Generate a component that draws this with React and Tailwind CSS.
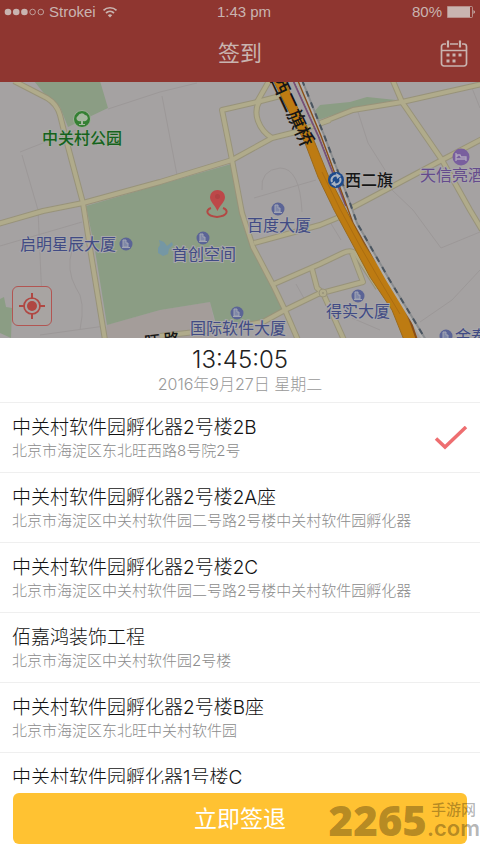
import React, { useState } from "react";

const places = [
  { id: 1, name: "中关村软件园孵化器2号楼2B", address: "北京市海淀区东北旺西路8号院2号" },
  { id: 2, name: "中关村软件园孵化器2号楼2A座", address: "北京市海淀区中关村软件园二号路2号楼中关村软件园孵化器" },
  { id: 3, name: "中关村软件园孵化器2号楼2C", address: "北京市海淀区中关村软件园二号路2号楼中关村软件园孵化器" },
  { id: 4, name: "佰嘉鸿装饰工程", address: "北京市海淀区中关村软件园2号楼" },
  { id: 5, name: "中关村软件园孵化器2号楼B座", address: "北京市海淀区东北旺中关村软件园" },
  { id: 6, name: "中关村软件园孵化器1号楼C", address: "北京市海淀区东北旺中关村软件园" }
];

const roads = [
  "M14 81 L47 98 Q57 104 60 115 L67 143 L83 203 L90 248 L105 340",
  "M-2 224 L43 211 L83 203 L160 182 L232 160 L272 138 L296 132 L330 120",
  "M257 102 L222 110 L232 160 L242 213 L253 247 L273 285 L285 310 L298 340",
  "M269 81 L257 102 L284 95",
  "M260 100 Q254 110 258 121 Q262 132 272 138",
  "M320 123 L353 110 L402 102 L482 84",
  "M393 81 L402 102 L442 160 L470 210 L482 230",
  "M348 210 L442 160 L482 139",
  "M254 243 L320 225 L342 216",
  "M274 284 L320 264 L343 253 Q351 249 356 254 L378 288",
  "M285 310 L318 294 L363 282 L352 253",
  "M312 269 L317 288 L323 293 L344 340",
  "M285 310 L263 322 L222 329 L160 336"
];

const lanes = [
  "M20 152 L76 130 M108 109 L160 92",
  "M22 155 L38 210 L42 300 M0 246 L82 222",
  "M160 92 L197 83 M162 96 L177 175",
  "M72 250 Q66 270 76 288 Q86 300 80 330 M40 335 L105 326",
  "M358 112 L368 143 L385 170 M392 190 L413 210",
  "M472 88 L480 108",
  "M262 190 Q260 170 280 168 Q300 168 302 212 M254 198 L316 180",
  "M413 210 L441 248 L480 232 M420 322 L452 300 L480 270",
  "M296 284 L306 302 M330 222 L341 240 M352 318 L380 330"
];

const buildings = [
  { x: 126, y: 244, label: "启明星辰大厦", tx: 68, ty: 250 },
  { x: 203, y: 238, label: "首创空间", tx: 204, ty: 260 },
  { x: 278, y: 209, label: "百度大厦", tx: 279, ty: 231 },
  { x: 237, y: 313, label: "国际软件大厦", tx: 238, ty: 334 },
  { x: 358, y: 296, label: "得实大厦", tx: 358, ty: 317 },
  { x: 446, y: 336, label: "金泰", tx: 471, ty: 342 }
];

function Map() {
  return (
    <svg
      viewBox="0 82 480 256"
      preserveAspectRatio="xMidYMid slice"
      className="block h-full w-full font-['Noto_Sans_CJK_SC',sans-serif] text-[16px]"
      role="img"
      aria-label="地图"
    >
      <rect x="0" y="82" width="480" height="256" fill="#a5a2a2" />
      <path d="M107 325 L160 310 L210 302 L218 340 L105 340 Z" fill="#a49d9a" />
      <g fill="#8b9d84">
        <path d="M86 206 L231 164 L240 213 L252 249 L283 310 L260 323 L217 328 L210 302 L160 310 L107 325 L95 250 Z" />
        <path d="M34 81 L100 81 L108 108 L68 127 L60 107 L47 97 Z" />
        <path d="M313 113 L320 105 L350 102 L367 97 L396 100 L355 108 L318 120 Z" />
        <path d="M0 299 L4 297 L6 307 L12 308 L11 338 L0 333 Z" />
      </g>

      <g fill="none" stroke="#9c9898" strokeWidth="1">
        {lanes.map((d) => <path key={d} d={d} />)}
      </g>
      <g fill="none" stroke="#98937a" strokeWidth="6" strokeLinejoin="round">
        {roads.map((d) => <path key={d} d={d} />)}
      </g>
      <g fill="none" stroke="#b0ab8b" strokeWidth="4" strokeLinejoin="round">
        {roads.map((d) => <path key={d} d={d} />)}
      </g>
      <circle cx="323" cy="293" r="4" fill="#b0ab8b" stroke="#98937a" />
      <circle cx="323" cy="293" r="1" fill="#98937a" />

      {/* highway, wider to the south */}
      <path
        d="M273 80 L305 143 L318 177 L334 210 L354 247 L370 277 L392 310 L404 340 L417 340 L405 310 L387 277 L366 247 L345 208 L328 175 L315 143 L284 80 Z"
        fill="#bd7b12"
        stroke="#9c6a1a"
        strokeWidth="1"
      />
      <path d="M322 172 L340 209 L360 246 L379 279 L400 314" fill="none" stroke="#ab6d11" strokeWidth="1" />

      {/* railway */}
      <g fill="none">
        <path d="M293 80 L318 135 L331 168 L346 206" stroke="#765078" strokeWidth="2" />
        <path d="M295 80 L320 135 L333 168 L348 207" stroke="#aaa79f" strokeWidth="2" />
        <path d="M298 80 L321 135 L346 203 L352 219 L365 243 L388 279 L407 311 L417 340" stroke="#8b4e16" strokeWidth="2" />
        <path d="M300 80 L323 135 L348 203 L355 222 L387 279 L424 340" stroke="#b2b0ae" strokeWidth="3" />
        <path d="M302 80 L324 135 L350 203 L357 223 L389 279 L426 340" stroke="#8a8c8e" strokeWidth="2" />
        <path d="M302 80 L324 135 L350 203 L357 223 L389 279 L426 340" stroke="#4a5560" strokeWidth="2" strokeDasharray="6 6" />
      </g>
      <text
        transform="translate(294 110) rotate(65)"
        textAnchor="middle"
        dominantBaseline="central"
        className="text-[19px] font-medium"
        fill="#161616"
      >
        西二旗桥
      </text>

      {/* pond */}
      <path d="M159 240 l5 2 3 4 5 -4 1 3 -4 4 -1 5 -5 2 -5 -3 0 -5 2 -3 Z" fill="#7597a4" />

      {/* buildings */}
      {buildings.map((b) => (
        <g key={b.label}>
          <circle cx={b.x} cy={b.y} r="6.5" fill="#5b6496" />
          <path
            d={`M${b.x - 3} ${b.y + 3} v-7 h3 v3 h2 v4 Z M${b.x - 4} ${b.y + 3.5} h8`}
            fill="#8088a8"
            stroke="#a3a6b4"
            strokeWidth="1"
          />
          <text x={b.tx} y={b.ty} textAnchor="middle" fill="#414b84" stroke="#a8a7aa" strokeWidth="2" paintOrder="stroke">
            {b.label}
          </text>
        </g>
      ))}

      {/* park */}
      <circle cx="82" cy="119" r="8.5" fill="#358033" stroke="#9faf99" strokeWidth="1" />
      <path d="M77 120 a3 3 0 0 1 1 -4 a4 4 0 0 1 7 -1 a3 3 0 0 1 2 5 q-2 2 -4 1 v3 h2 v1 h-6 v-1 h2 v-3 q-2 1 -4 -1 Z" fill="#a5b79f" />
      <text x="82" y="144" textAnchor="middle" className="font-medium" fill="#15631c" stroke="#a3aaa0" strokeWidth="2" paintOrder="stroke">中关村公园</text>

      {/* metro */}
      <circle cx="336" cy="180" r="8" fill="#1d4a8c" />
      <g fill="none" stroke="#a9b3c2" strokeWidth="2">
        <path d="M332 182 a4.5 4.5 0 0 1 6 -6" />
        <path d="M340 178 a4.5 4.5 0 0 1 -6 6" />
      </g>
      <path d="M336 173 l5 3 -4 3 Z M336 187 l-5 -3 4 -3 Z" fill="#a9b3c2" />
      <text x="369" y="186" textAnchor="middle" className="font-medium" fill="#161616" stroke="#a8a6a6" strokeWidth="2" paintOrder="stroke">西二旗</text>

      {/* hotel */}
      <circle cx="461" cy="157" r="8.5" fill="#795f9e" />
      <path d="M456 153 v8 M456 159 h10 v2 M457 157 v-2 h3 l1 2 h5 v2" fill="none" stroke="#b0a6bd" strokeWidth="1.3" />
      <text x="420" y="181" fill="#644b8c" stroke="#a8a5aa" strokeWidth="2" paintOrder="stroke">天信亮酒</text>

      <text x="145" y="348" transform="rotate(-6 145 348)" className="font-medium" fill="#161616">旺 路</text>

      {/* current position */}
      <path d="M211 208 C205 210 206 216 217 217 C228 216 229 210 223 208" fill="none" stroke="#b34844" strokeWidth="2" />
      <path d="M217.500 211 C215 205 210 202 210 197 a7.500 7 0 0 1 15 0 C225 202 220 205 217.500 211 Z" fill="#bd4849" />
      <circle cx="217.500" cy="196.500" r="2.500" fill="#b04243" />
    </svg>
  );
}

function StatusBar() {
  return (
    <div className="grid h-6 grid-cols-3 items-center px-1 text-[15px] leading-6">
      <div className="flex items-center gap-1">
        <svg width="41" height="8" viewBox="0 0 41 8" fill="currentColor" aria-hidden="true">
          <circle cx="4" cy="4" r="3.3" />
          <circle cx="12.200" cy="4" r="3.3" />
          <circle cx="20.400" cy="4" r="3.3" />
          <circle cx="28.600" cy="4" r="2.800" fill="none" stroke="currentColor" strokeWidth="0.8" />
          <circle cx="36.800" cy="4" r="2.800" fill="none" stroke="currentColor" strokeWidth="0.8" />
        </svg>
        <span>Strokei</span>
        <svg width="20" height="12" viewBox="1 0 20 12" aria-hidden="true">
          <g fill="none" stroke="currentColor" strokeWidth="1.7">
            <path d="M4.500 4.300 a9.500 9.500 0 0 1 13 0" />
            <path d="M7 7 a6 6 0 0 1 8 0" />
          </g>
          <path d="M11 11.500 L8.800 9.300 a3.200 3.200 0 0 1 4.400 0 Z" fill="currentColor" />
        </svg>
      </div>
      <div className="pl-2 text-center">1:43 pm</div>
      <div className="flex items-center justify-end gap-1">
        <span>80%</span>
        <svg width="30" height="12" viewBox="0 0 30 12" fill="currentColor" aria-hidden="true">
          <path d="M2 1 h22 v10 h-22 Z" />
          <path d="M1.500 0.500 h24 q1 0 1 1 v9 q0 1 -1 1 h-24 Z" fill="none" stroke="currentColor" strokeWidth="0.7" />
          <path d="M27.500 4 q3 2 0 4 Z" />
        </svg>
      </div>
    </div>
  );
}

function CalendarIcon() {
  return (
    <svg width="28" height="28" viewBox="0 0 28 28" fill="none" stroke="currentColor" strokeWidth="1.700" aria-hidden="true">
      <path d="M6 4 H4 a2.500 2.500 0 0 0 -2.500 2.500 V23.500 A2.500 2.500 0 0 0 4 26 H24 a2.500 2.500 0 0 0 2.500 -2.500 V6.500 A2.500 2.500 0 0 0 24 4 H22 M10 4 H18 M1.500 10.500 H26.500" />
      <path d="M8 0.500 V7.500 M20 0.500 V7.500" strokeWidth="2.200" />
      <g fill="currentColor" stroke="none">
        <rect x="6.500" y="13.500" width="3" height="3" />
        <rect x="12.500" y="13.500" width="3" height="3" />
        <rect x="18.500" y="13.500" width="3" height="3" />
        <rect x="6.500" y="19.500" width="3" height="3" />
        <rect x="12.500" y="19.500" width="3" height="3" />
      </g>
    </svg>
  );
}

export default function App() {
  const [selected, setSelected] = useState(1);

  return (
    <div className="flex h-screen flex-col overflow-hidden bg-white font-['Liberation_Sans','Noto_Sans_CJK_SC',sans-serif]">
      <header className="shrink-0 bg-[#8f3630] text-[#c9b4b0]">
        <StatusBar />
        <div className="grid h-[58px] grid-cols-[1fr_auto_1fr] items-center px-3 pt-[2px]">
          <span />
          <h1 className="text-[22px] leading-8">签到</h1>
          <button type="button" aria-label="签到日历" className="justify-self-end">
            <CalendarIcon />
          </button>
        </div>
      </header>

      <section className="relative h-64 shrink-0">
        <Map />
        <button
          type="button"
          aria-label="定位"
          className="absolute bottom-3 left-3 flex size-10 items-center justify-center rounded-md border border-[#b25552] bg-[#a8a4a2] text-[#b04742]"
        >
          <svg width="26" height="26" viewBox="0 0 26 26" fill="none" stroke="currentColor" strokeWidth="2" aria-hidden="true">
            <circle cx="13" cy="13" r="8" strokeWidth="1.700" />
            <circle cx="13" cy="13" r="5" fill="currentColor" stroke="none" />
            <path d="M13 0 V6 M13 20 V26 M0 13 H6 M20 13 H26" />
          </svg>
        </button>
      </section>

      <div className="shrink-0 border-b border-[#efefef] pt-2 pb-2 text-center font-['Inter','Noto_Sans_CJK_SC',sans-serif] font-light">
        <div className="text-[24px] leading-7 text-[#222222]">13:45:05</div>
        <div className="text-[16px] leading-5 text-[#999999]">2016年9月27日 星期二</div>
      </div>

      <ul className="min-h-0 flex-1 overflow-hidden font-['Inter','Noto_Sans_CJK_SC',sans-serif] font-light">
        {places.map((p) => (
          <li key={p.id} className="border-b border-[#efefef]">
            <button
              type="button"
              aria-pressed={selected === p.id}
              onClick={() => setSelected(p.id)}
              className="flex w-full items-center justify-between px-3 pt-[13px] pb-[10px] text-left"
            >
              <span className="block">
                <span className="block text-[19px] leading-6 text-[#111111]">{p.name}</span>
                <span className="block text-[15px] leading-[22px] text-[#8c8c8c]">{p.address}</span>
              </span>
              {selected === p.id && (
                <svg width="34" height="26" viewBox="0 0 34 26" fill="none" stroke="#ee6e70" strokeWidth="3.500" aria-hidden="true">
                  <path d="M2 12.500 L11 21 L32 1" />
                </svg>
              )}
            </button>
          </li>
        ))}
      </ul>

      <footer className="relative shrink-0 px-[13px] pt-[9px] pb-[10px]">
        <button type="button" className="h-[51px] w-full rounded-md bg-[#ffc232] pt-[2px] text-[23px] text-white">
          立即签退
        </button>
        <div className="pointer-events-none absolute right-0 bottom-3 flex items-end text-black/30">
          <span className="font-['Open_Sans',sans-serif] text-[42px] leading-[44px] font-extrabold">2265</span>
          <span className="flex flex-col pb-1">
            <span className="pl-1 text-[15px] leading-4 font-medium">手游网</span>
            <span className="font-['Inter',sans-serif] text-[22px] leading-5 font-semibold">.com</span>
          </span>
        </div>
      </footer>
    </div>
  );
}
